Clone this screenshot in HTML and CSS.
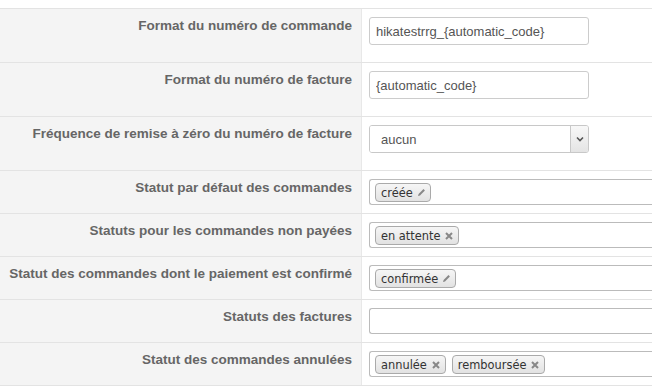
FILE: index.html
```html
<!DOCTYPE html>
<html lang="fr">
<head>
    <meta charset="UTF-8">
    <title>Configuration des commandes</title>
    <link rel="stylesheet" href="styles.css">
</head>
<body>
    <div class="config-table">
        <div class="row">
            <div class="key"><label for="order_format">Format du numéro de commande</label></div>
            <div class="value"><input type="text" id="order_format" class="text-input" value="hikatestrrg_{automatic_code}"></div>
        </div>
        <div class="row">
            <div class="key"><label for="invoice_format">Format du numéro de facture</label></div>
            <div class="value"><input type="text" id="invoice_format" class="text-input" value="{automatic_code}"></div>
        </div>
        <div class="row">
            <div class="key"><label for="invoice_reset">Fréquence de remise à zéro du numéro de facture</label></div>
            <div class="value">
                <div class="select-box">
                    <select id="invoice_reset">
                        <option>aucun</option>
                    </select>
                    <span class="select-arrow">
                        <svg width="8" height="6" viewBox="0 0 8 6"><path d="M1 1.5 L4 4.5 L7 1.5" fill="none" stroke="#555" stroke-width="1.6"/></svg>
                    </span>
                </div>
            </div>
        </div>
        <div class="row">
            <div class="key"><label>Statut par défaut des commandes</label></div>
            <div class="value">
                <div class="tag-box">
                    <span class="tag">créée <svg class="pencil" width="9" height="9" viewBox="0 0 9 9"><path d="M1 8 L1.6 6 L6.5 1.1 L7.9 2.5 L3 7.4 Z" fill="#888"/></svg></span>
                </div>
            </div>
        </div>
        <div class="row">
            <div class="key"><label>Statuts pour les commandes non payées</label></div>
            <div class="value">
                <div class="tag-box">
                    <span class="tag">en attente <svg class="cross" width="10" height="10" viewBox="0 0 10 10"><path d="M2 2 L8 8 M8 2 L2 8" stroke="#888" stroke-width="2"/></svg></span>
                </div>
            </div>
        </div>
        <div class="row">
            <div class="key"><label>Statut des commandes dont le paiement est confirmé</label></div>
            <div class="value">
                <div class="tag-box">
                    <span class="tag">confirmée <svg class="pencil" width="9" height="9" viewBox="0 0 9 9"><path d="M1 8 L1.6 6 L6.5 1.1 L7.9 2.5 L3 7.4 Z" fill="#888"/></svg></span>
                </div>
            </div>
        </div>
        <div class="row">
            <div class="key"><label>Statuts des factures</label></div>
            <div class="value">
                <div class="tag-box"></div>
            </div>
        </div>
        <div class="row">
            <div class="key"><label>Statut des commandes annulées</label></div>
            <div class="value">
                <div class="tag-box">
                    <span class="tag">annulée <svg class="cross" width="10" height="10" viewBox="0 0 10 10"><path d="M2 2 L8 8 M8 2 L2 8" stroke="#888" stroke-width="2"/></svg></span>
                    <span class="tag">remboursée <svg class="cross" width="10" height="10" viewBox="0 0 10 10"><path d="M2 2 L8 8 M8 2 L2 8" stroke="#888" stroke-width="2"/></svg></span>
                </div>
            </div>
        </div>
    </div>
</body>
</html>
```

FILE: styles.css
```css
body {
    margin: 0;
    padding-top: 8px;
    background: #fff;
    font-family: "Liberation Sans", Arial, sans-serif;
    font-size: 13px;
    overflow: hidden;
}

.config-table {
    border-bottom: 1px solid #e3e3e3;
}

.row {
    display: flex;
    border-top: 1px solid #e3e3e3;
}

.key {
    flex: 0 0 352px;
    padding: 8px 9px 0 0;
    background: #f4f4f4;
    border-right: 1px solid #e8e8e8;
    text-align: right;
    line-height: 18px;
}

.key label {
    font-weight: bold;
    font-size: 13.5px;
    color: #666;
}

.value {
    flex: 1;
    padding: 8px 0 8px 7px;
    min-width: 0;
}

.text-input {
    display: block;
    box-sizing: border-box;
    width: 220px;
    height: 28px;
    margin: 0 0 9px;
    padding: 4px 6px;
    border: 1px solid #ccc;
    border-radius: 3px;
    font-family: "Liberation Sans", Arial, sans-serif;
    font-size: 13px;
    color: #555;
}

.select-box {
    display: flex;
    box-sizing: border-box;
    width: 220px;
    height: 28px;
    margin-bottom: 9px;
    border: 1px solid #c8c8c8;
    border-radius: 3px;
    overflow: hidden;
}

.select-box select {
    flex: 1;
    -webkit-appearance: none;
    appearance: none;
    border: none;
    background: #fff;
    padding: 0 11px;
    font-family: "Liberation Sans", Arial, sans-serif;
    font-size: 13px;
    color: #555;
    outline: none;
}

.select-arrow {
    display: flex;
    align-items: center;
    justify-content: center;
    width: 17px;
    border-left: 1px solid #c8c8c8;
    background: linear-gradient(#f8f8f8, #e4e4e4);
}

.tag-box {
    box-sizing: border-box;
    width: 300px;
    height: 26px;
    padding: 3px 5px;
    border: 1px solid #bbb;
    border-right: none;
    border-radius: 3px 0 0 3px;
    display: flex;
    gap: 6px;
    align-items: flex-start;
}

.tag {
    display: inline-flex;
    align-items: center;
    gap: 4px;
    height: 19px;
    box-sizing: border-box;
    padding: 0 4px 0 5px;
    border: 1px solid #aaa;
    border-radius: 4px;
    background: linear-gradient(#f6f6f6, #e2e2e2);
    font-family: "DejaVu Sans", Verdana, sans-serif;
    font-size: 11.4px;
    color: #333;
}
```
